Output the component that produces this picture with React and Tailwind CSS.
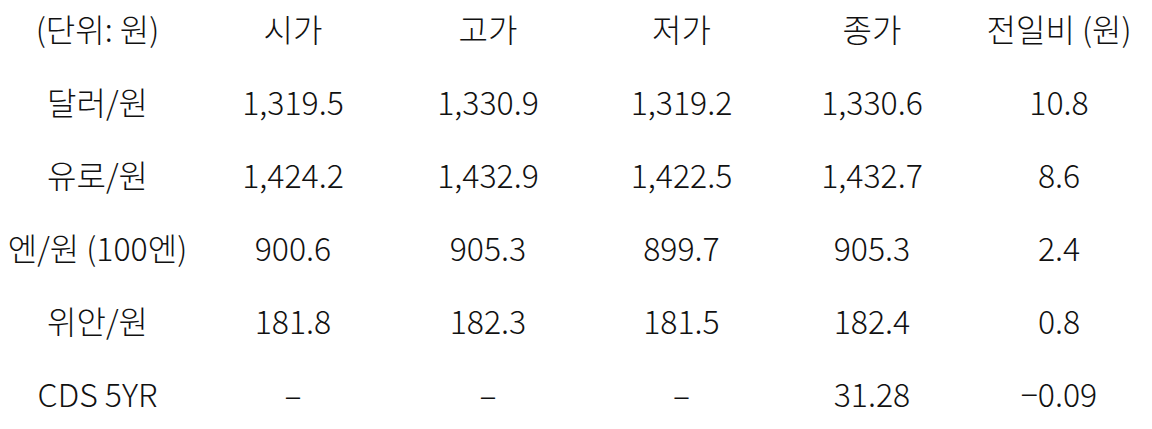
const header = ['(단위: 원)', '시가', '고가', '저가', '종가', '전일비 (원)'];

const rows = [
  ['달러/원', '1,319.5', '1,330.9', '1,319.2', '1,330.6', '10.8'],
  ['유로/원', '1,424.2', '1,432.9', '1,422.5', '1,432.7', '8.6'],
  ['엔/원 (100엔)', '900.6', '905.3', '899.7', '905.3', '2.4'],
  ['위안/원', '181.8', '182.3', '181.5', '182.4', '0.8'],
  ['CDS 5YR', '–', '–', '–', '31.28', '−0.09'],
];

const cols = 'grid grid-cols-[195px_196px_194px_193px_188px_186px]';

export default function App() {
  return (
    <div
      className="w-[1152px] h-[429px] bg-white text-[#111] text-[32px] font-light leading-none overflow-hidden"
      style={{ fontFamily: '"Noto Sans CJK KR", "Noto Sans", sans-serif' }}
    >
      <div className={`${cols} h-[64px] pb-[8px] items-center`}>
        {header.map((h) => (
          <div key={h} className="text-center whitespace-nowrap">
            {h}
          </div>
        ))}
      </div>
      {rows.map((r, i) => (
        <div key={i} className={`${cols} h-[73px] items-center`}>
          {r.map((c, j) => (
            <div key={j} className="text-center whitespace-nowrap">
              {c}
            </div>
          ))}
        </div>
      ))}
    </div>
  );
}
